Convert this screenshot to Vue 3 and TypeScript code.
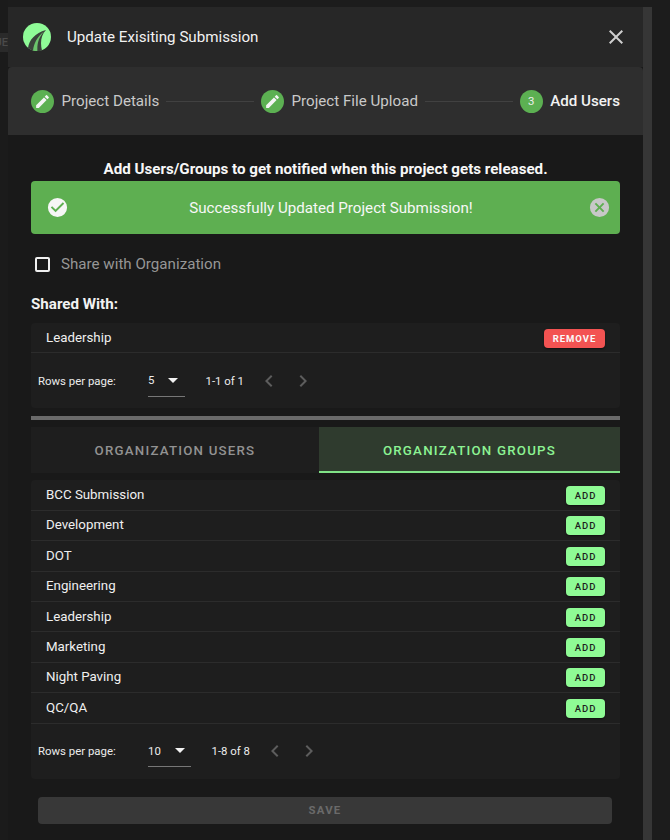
<script setup lang="ts">
const groups: string[] = ['BCC Submission', 'Development', 'DOT', 'Engineering', 'Leadership', 'Marketing', 'Night Paving', 'QC/QA']
const pencil = 'M3 17.25V21h3.75L17.81 9.94l-3.75-3.75L3 17.25zM20.71 7.04a1 1 0 0 0 0-1.41l-2.34-2.34a1 1 0 0 0-1.41 0l-1.83 1.83 3.75 3.75 1.83-1.83z'
const pagers = { shared: { size: '5', range: '1-1 of 1' }, groups: { size: '10', range: '1-8 of 8' } }
</script>

<template>
  <div class="page">
    <div class="backdrop-left"><span class="peek">UE</span></div>
    <div class="modal">
      <header class="head">
        <svg class="logo" viewBox="0 0 28 28" aria-hidden="true">
          <circle cx="14" cy="14" r="14" fill="#8ffb97" />
          <path d="M5 25C6 17 12 10 23 7 18 12 17 20 19 27.5 14 29 9 28 5 25z" fill="#3a423b" />
          <path d="M10 27.6C11 20 14 14 21 8.5 16 14 14 20 14.4 28.2 13 28.2 11.4 28 10 27.6z" fill="#6bc46c" />
        </svg>
        <h1 class="title">Update Exisiting Submission</h1>
        <svg class="close" viewBox="0 0 24 24" aria-hidden="true">
          <path d="M19 6.41 17.59 5 12 10.59 6.41 5 5 6.41 10.59 12 5 17.59 6.41 19 12 13.41 17.59 19 19 17.59 13.41 12z" />
        </svg>
      </header>

      <nav class="stepper">
        <div class="step">
          <span class="dot"><svg viewBox="0 0 24 24" class="pencil"><path :d="pencil" /></svg></span>
          <span class="step-label">Project Details</span>
        </div>
        <span class="connector"></span>
        <div class="step">
          <span class="dot"><svg viewBox="0 0 24 24" class="pencil"><path :d="pencil" /></svg></span>
          <span class="step-label">Project File Upload</span>
        </div>
        <span class="connector"></span>
        <div class="step">
          <span class="dot num">3</span>
          <span class="step-label active">Add Users</span>
        </div>
      </nav>

      <main class="body">
        <p class="lead">Add Users/Groups to get notified when this project gets released.</p>

        <div class="alert">
          <svg class="alert-check" viewBox="0 0 24 24"><path d="M12 2a10 10 0 1 0 0 20 10 10 0 0 0 0-20zm-2 15-5-5 1.41-1.41L10 14.17l7.59-7.59L19 8l-9 9z" /></svg>
          <span class="alert-text">Successfully Updated Project Submission!</span>
          <svg class="alert-close" viewBox="0 0 24 24"><path d="M12 2a10 10 0 1 0 0 20 10 10 0 0 0 0-20zm5 13.59L15.59 17 12 13.41 8.41 17 7 15.59 10.59 12 7 8.41 8.41 7 12 10.59 15.59 7 17 8.41 13.41 12 17 15.59z" /></svg>
        </div>

        <label class="share">
          <span class="checkbox"></span>
          <span class="share-text">Share with Organization</span>
        </label>

        <h2 class="shared-title">Shared With:</h2>

        <section class="table shared">
          <div class="row">
            <span class="cell">Leadership</span>
            <button class="btn remove">REMOVE</button>
          </div>
          <div class="pager">
            <span class="rows-label">Rows per page:</span>
            <div class="select small">
              <span>{{ pagers.shared.size }}</span>
              <i class="caret"></i>
            </div>
            <span class="range">{{ pagers.shared.range }}</span>
            <svg class="chev first" viewBox="0 0 24 24"><path d="M15.41 7.41 14 6l-6 6 6 6 1.41-1.41L10.83 12z" /></svg>
            <svg class="chev" viewBox="0 0 24 24"><path d="M10 6 8.59 7.41 13.17 12l-4.58 4.59L10 18l6-6z" /></svg>
          </div>
        </section>

        <div class="divider"></div>

        <div class="tabs">
          <div class="tab">ORGANIZATION USERS</div>
          <div class="tab on">ORGANIZATION GROUPS</div>
        </div>

        <section class="table groups">
          <div v-for="g in groups" :key="g" class="row">
            <span class="cell">{{ g }}</span>
            <button class="btn add">ADD</button>
          </div>
          <div class="pager tall">
            <span class="rows-label">Rows per page:</span>
            <div class="select wide">
              <span>{{ pagers.groups.size }}</span>
              <i class="caret"></i>
            </div>
            <span class="range">{{ pagers.groups.range }}</span>
            <svg class="chev first" viewBox="0 0 24 24"><path d="M15.41 7.41 14 6l-6 6 6 6 1.41-1.41L10.83 12z" /></svg>
            <svg class="chev" viewBox="0 0 24 24"><path d="M10 6 8.59 7.41 13.17 12l-4.58 4.59L10 18l6-6z" /></svg>
          </div>
        </section>

        <button class="save">SAVE</button>
      </main>
    </div>
    <div class="scrollbar"></div>
    <div class="backdrop-right"></div>
  </div>
</template>

<style scoped>
.page {
  display: flex;
  width: 670px;
  height: 840px;
  overflow: hidden;
  background: #1c1c1c;
  font-family: Roboto, "Liberation Sans", sans-serif;
  color: #fff;
}
.backdrop-left {
  width: 8px;
  flex: none;
  padding-top: 33px;
  overflow: hidden;
  background: #1b1b1b;
}
.peek {
  display: block;
  height: 19px;
  width: 8px;
  background: #2a2a2a;
  color: #4a4a4a;
  font-size: 11px;
  font-weight: 500;
  line-height: 19px;
  white-space: nowrap;
  overflow: hidden;
  direction: rtl;
}
.modal {
  width: 635px;
  flex: none;
  margin-top: 7px;
  background: #191919;
}
.head {
  display: flex;
  align-items: center;
  height: 60px;
  padding: 0 15px;
  background: #272727;
}
.logo {
  width: 28px;
  height: 28px;
  flex: none;
  margin-right: 16px;
}
.title {
  flex: 1;
  margin: 0;
  font-size: 15.15px;
  font-weight: 400;
  color: #f2f2f2;
}
.close {
  width: 24px;
  height: 24px;
  fill: #cfcfcf;
}
.stepper {
  display: flex;
  align-items: center;
  height: 68px;
  padding: 0 23px;
  background: #2e2e2e;
  border-radius: 4px 4px 0 0;
}
.step {
  display: flex;
  align-items: center;
  gap: 7.5px;
  flex: none;
}
.dot {
  display: flex;
  align-items: center;
  justify-content: center;
  width: 23px;
  height: 23px;
  border-radius: 50%;
  background: #5cb052;
}
.num {
  font-size: 11.4px;
  color: #eee;
}
.pencil {
  width: 17px;
  height: 17px;
  fill: #f4f4f4;
}
.step-label {
  font-size: 15.15px;
  color: #c9c9c9;
}
.step-label.active {
  color: #f2f2f2;
  font-weight: 500;
}
.connector {
  flex: 1;
  height: 1px;
  margin: 0 7px;
  background: #414141;
}
.body {
  padding: 0 23px;
}
.lead {
  margin: 0;
  padding-top: 25px;
  height: 46px;
  box-sizing: border-box;
  font-size: 15.15px;
  line-height: 19px;
  font-weight: 700;
  text-align: center;
  color: #f7f7f7;
}
.alert {
  display: flex;
  align-items: center;
  height: 53px;
  padding: 0 9.5px 0 14.5px;
  background: #5eaf51;
  border-radius: 4px;
}
.alert-check {
  width: 23px;
  height: 23px;
  flex: none;
  fill: #f6f6f6;
}
.alert-text {
  flex: 1;
  padding-left: 6px;
  text-align: center;
  font-size: 15.15px;
  color: #f7f7f7;
}
.alert-close {
  width: 23px;
  height: 23px;
  flex: none;
  fill: #c8c8c8;
}
.share {
  display: flex;
  align-items: center;
  height: 60px;
  padding-left: 4px;
  gap: 11px;
}
.checkbox {
  width: 15px;
  height: 15px;
  box-sizing: border-box;
  border: 2px solid #efefef;
  border-radius: 2px;
}
.share-text {
  font-size: 15.15px;
  color: #969696;
}
.shared-title {
  margin: 0;
  height: 29px;
  padding-top: 1px;
  box-sizing: border-box;
  font-size: 15.15px;
  line-height: 19px;
  font-weight: 700;
  color: #f2f2f2;
}
.table {
  background: #1e1e1e;
  border-radius: 4px;
}
.row {
  display: flex;
  align-items: center;
  justify-content: space-between;
  height: 30.4px;
  box-sizing: border-box;
  padding: 0 15px;
  border-bottom: 1px solid #2c2c2c;
  color: #f0f0f0;
  font-size: 13.3px;
}
.cell {
  margin-bottom: 1px;
}
.pager {
  display: flex;
  align-items: center;
  height: 55px;
  padding-left: 7px;
  font-size: 11.4px;
  color: #ececec;
}
.rows-label {
  width: 110px;
  flex: none;
}
.select {
  display: flex;
  align-items: center;
  justify-content: space-between;
  box-sizing: border-box;
  height: 32px;
  padding: 0 6px 0 0;
  border-bottom: 1px solid #777;
}
.select.small {
  width: 37px;
  padding-right: 7px;
}
.select.wide {
  width: 43px;
}
.caret {
  width: 0;
  height: 0;
  border-left: 5px solid transparent;
  border-right: 5px solid transparent;
  border-top: 5px solid #f2f2f2;
}
.range {
  margin-left: 20.5px;
}
.chev {
  width: 24px;
  height: 24px;
  margin-right: 10px;
  fill: #5d5d5d;
}
.chev.first {
  margin-left: 13px;
}
.btn {
  border: none;
  border-radius: 4px;
  margin-top: 1px;
  font-family: inherit;
  font-size: 9.5px;
  font-weight: 500;
  letter-spacing: 1px;
  padding: 0;
  box-shadow: 0 1px 2px rgba(0, 0, 0, 0.5);
}
.remove {
  width: 61px;
  height: 19px;
  background: #f35352;
  color: #fafafa;
  font-weight: 700;
}
.add {
  width: 39px;
  height: 19px;
  background: #8ffb95;
  color: #1d1d1d;
}
.divider {
  height: 4px;
  margin-top: 8px;
  background: #6a6a6a;
}
.tabs {
  display: flex;
  height: 46px;
  margin-top: 7px;
  background: #1e1e1e;
}
.tab {
  display: flex;
  align-items: center;
  justify-content: center;
  flex: 0 0 288px;
  font-size: 13.3px;
  font-weight: 500;
  letter-spacing: 1.2px;
  color: #929292;
}
.tab.on {
  flex: 1;
  box-sizing: border-box;
  background: #2f3b2e;
  border-bottom: 2px solid #80e287;
  color: #8cf393;
  padding-top: 2px;
}
.groups {
  margin-top: 7px;
}
.save {
  display: block;
  width: 574px;
  height: 27px;
  margin: 18px 0 0 7px;
  border: none;
  border-radius: 4px;
  background: #383838;
  color: #6a6a6a;
  font-family: inherit;
  font-size: 11.4px;
  font-weight: 700;
  letter-spacing: 1.2px;
}
.scrollbar {
  width: 9px;
  flex: none;
  margin-top: 7px;
  background: #363636;
}
.backdrop-right {
  flex: 1;
  background: #1c1c1c;
}
</style>
